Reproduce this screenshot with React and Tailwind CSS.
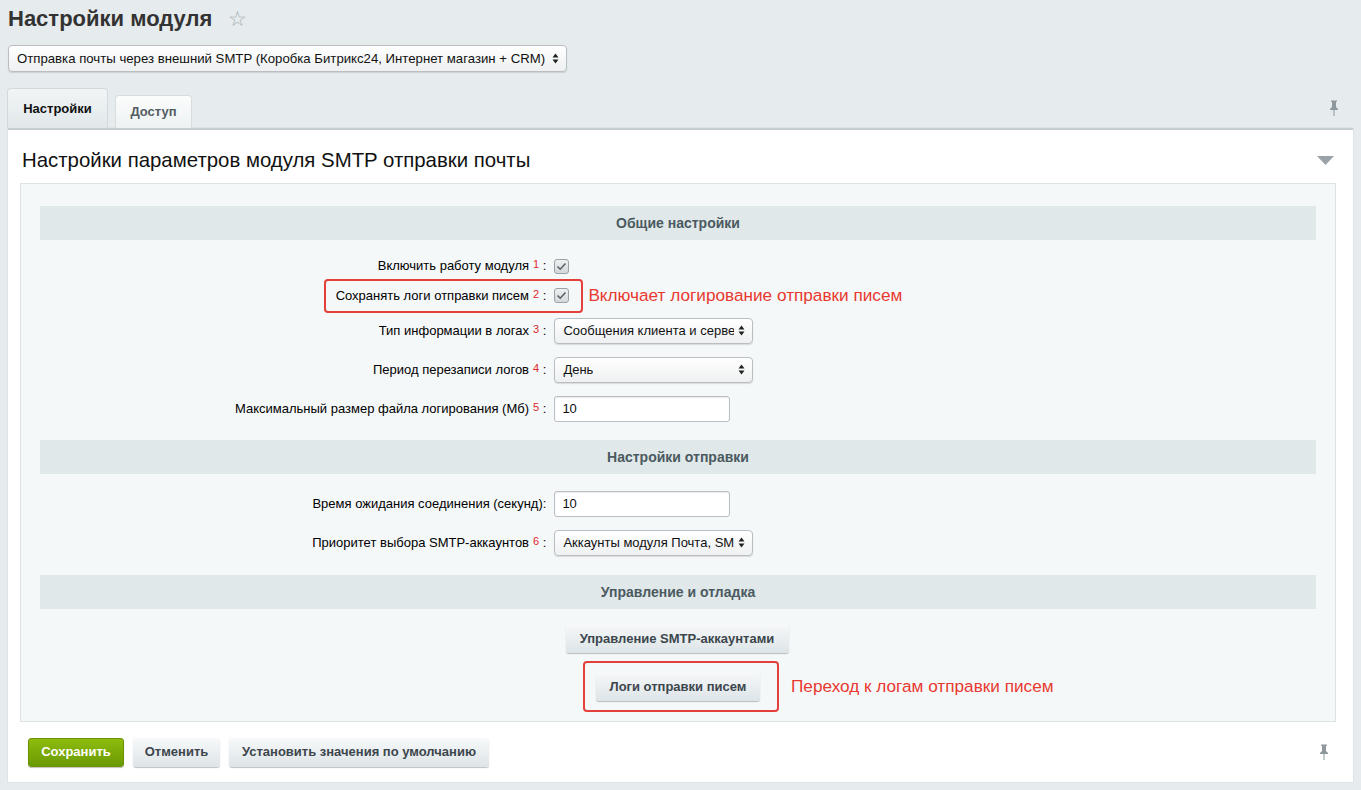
import React from "react";

const font = { fontFamily: '"Liberation Sans", Arial, sans-serif' };

function Arrows() {
  return (
    <svg width="7" height="11" viewBox="0 0 7 11" className="shrink-0 ml-[4px]">
      <path d="M3.5 0.5 L6.5 4.5 H0.5 Z" fill="#222" />
      <path d="M3.5 10.5 L6.5 6.5 H0.5 Z" fill="#222" />
    </svg>
  );
}

function Select({ value, w, h = "h-[26px]", text = "text-[13px]" }) {
  return (
    <div
      className={`${w} ${h} flex items-center justify-between pl-[8px] pr-[7px] rounded-[4px] border border-[#b8bec2] bg-gradient-to-b from-white to-[#eef0f1] shadow-[0_1px_1px_rgba(0,0,0,0.12)] overflow-hidden`}
    >
      <span className={`${text} text-[#111] whitespace-nowrap overflow-hidden`}>{value}</span>
      <Arrows />
    </div>
  );
}

function Input({ value }) {
  return (
    <div className="w-[176px] h-[26px] flex items-center px-[7px] bg-white border border-[#b8bec2] rounded-[3px] shadow-[inset_0_1px_1px_rgba(0,0,0,0.08)] text-[13px] text-[#111]">
      {value}
    </div>
  );
}

function Checkbox() {
  return (
    <div className="w-[15px] h-[15px] rounded-[3px] border border-[#9aa2a6] bg-gradient-to-b from-[#eef0f1] to-[#d3d8db] flex items-center justify-center">
      <svg width="11" height="9" viewBox="0 0 11 9">
        <path d="M1.5 4.5 L4.2 7.2 L9.5 1.5" fill="none" stroke="#5b6266" strokeWidth="1.6" />
      </svg>
    </div>
  );
}

function Sup({ n }) {
  return <sup className="text-[11px] text-[#e0292b] ml-[4px] relative top-[-2px]">{n}</sup>;
}

function Row({ label, n, h, children }) {
  return (
    <div className={`grid grid-cols-[40%_60%] items-center ${h}`}>
      <div className="text-right pr-[4px] text-[13px] text-[#000]">
        {label}
        {n ? <Sup n={n} /> : null}
        {n ? " :" : ""}
      </div>
      <div className="pl-[4px] flex items-center">{children}</div>
    </div>
  );
}

function Header({ title }) {
  return (
    <div className="h-[34px] bg-[#e0e8ea] flex items-center justify-center text-[14px] font-bold text-[#4b5a60]">
      {title}
    </div>
  );
}

function Btn({ children, className = "" }) {
  return (
    <button
      className={`h-[29px] rounded-[3px] bg-gradient-to-b from-[#f7f9fa] to-[#dde4e7] shadow-[0_1px_1px_rgba(0,0,0,0.25)] text-[13px] font-bold text-[#3c464c] ${className}`}
    >
      {children}
    </button>
  );
}

function Pin() {
  return (
    <svg width="10" height="16" viewBox="0 0 10 16">
      <path d="M2 0.5 H8 V1.8 H7 V7 L9 9 V10 H1 V9 L3 7 V1.8 H2 Z" fill="#8e979b" />
      <rect x="4.5" y="10" width="1" height="6" fill="#8e979b" />
    </svg>
  );
}

export default function App() {
  return (
    <div style={font} className="w-[1361px] h-[790px] bg-[#e6ebed] overflow-hidden">
      {/* title */}
      <div className="h-[36px] flex items-center pl-2 pt-[1px]">
        <span className="text-[22px] font-bold text-[#333]">Настройки модуля</span>
        <span className="ml-[16px] text-[#a3abaf] text-[21px] leading-none">☆</span>
      </div>

      <div className="mt-[9px] ml-2">
        <Select
          value="Отправка почты через внешний SMTP (Коробка Битрикс24, Интернет магазин + CRM)"
          w="w-[559px]"
          h="h-[27px]"
          text="text-[13.2px]"
        />
      </div>

      {/* tabs */}
      <div className="mt-[16px] ml-[7px] mr-2 h-[40px] flex items-end relative">
        <div className="h-[40px] w-[101px] rounded-t-[4px] border border-b-0 border-[#d3dadd] bg-gradient-to-b from-[#f2f5f6] to-[#e1e8ea] flex items-center justify-center text-[13px] font-bold text-[#111]">
          Настройки
        </div>
        <div className="ml-[7px] h-[33px] w-[77px] rounded-t-[4px] border border-b-0 border-[#d6dcdf] bg-gradient-to-b from-[#fbfcfc] to-[#eef2f3] flex items-center justify-center text-[13px] font-bold text-[#535c61]">
          Доступ
        </div>
        <div className="absolute right-[14px] top-[12px]">
          <Pin />
        </div>
      </div>

      {/* panel */}
      <div className="ml-2 w-[1345px] h-[654px] bg-white border-t-2 border-[#c6ced1] shadow-[0_0_1px_rgba(0,0,0,0.2)]">
        <div className="h-[53px] flex items-center justify-between pl-[14px] pr-[19px] pt-[8px]">
          <span className="text-[20.4px] text-[#111]">Настройки параметров модуля SMTP отправки почты</span>
          <svg width="17" height="9" viewBox="0 0 17 9">
            <path d="M0 0 H17 L8.5 9 Z" fill="#9aa3a7" />
          </svg>
        </div>

        <div className="ml-3 w-[1316px] h-[539px] border border-[#dde4e6] bg-[#f5f8f9] px-[19px] pt-[22px]">
          <Header title="Общие настройки" />
          <div className="pt-[11px] pb-[12px]">
            <Row label="Включить работу модуля" n="1" h="h-[30px]">
              <Checkbox />
            </Row>
            <div className="relative">
              <div className="absolute left-[284px] top-[-2px] w-[259px] h-[34px] border-2 border-[#e4403b] rounded-[4px]" />
              <Row label="Сохранять логи отправки писем" n="2" h="h-[30px]">
                <Checkbox />
                <span className="ml-[19px] text-[17.2px] text-[#e8382f]">Включает логирование отправки писем</span>
              </Row>
            </div>
            <Row label="Тип информации в логах" n="3" h="h-[39px]">
              <Select value="Сообщения клиента и сервера" w="w-[199px]" />
            </Row>
            <Row label="Период перезаписи логов" n="4" h="h-[39px]">
              <Select value="День" w="w-[199px]" />
            </Row>
            <Row label="Максимальный размер файла логирования (Мб)" n="5" h="h-[39px]">
              <Input value="10" />
            </Row>
          </div>

          <Header title="Настройки отправки" />
          <div className="pt-[10px] pb-[13px]">
            <div className="grid grid-cols-[40%_60%] items-center h-[39px]">
              <div className="text-right pr-[4px] text-[13px] text-[#000]">Время ожидания соединения (секунд):</div>
              <div className="pl-[4px] flex items-center">
                <Input value="10" />
              </div>
            </div>
            <Row label="Приоритет выбора SMTP-аккаунтов" n="6" h="h-[39px]">
              <Select value="Аккаунты модуля Почта, SMTP" w="w-[199px]" />
            </Row>
          </div>

          <Header title="Управление и отладка" />
          <div className="flex flex-col items-center pt-[15px]">
            <Btn className="w-[223px] ml-[-2px]">Управление SMTP-аккаунтами</Btn>
            <div className="relative mt-[8px] ml-[6px] border-2 border-[#e4403b] rounded-[4px] pl-[11px] pr-[17px] py-[9px]">
              <Btn className="w-[164px]">Логи отправки писем</Btn>
              <span className="absolute left-full top-1/2 -translate-y-1/2 ml-[14px] whitespace-nowrap text-[17.2px] text-[#e8382f]">
                Переход к логам отправки писем
              </span>
            </div>
          </div>
        </div>

        {/* footer */}
        <div className="h-[60px] flex items-center pl-5 pr-[24px]">
          <button className="h-[29px] w-[96px] rounded-[3px] bg-gradient-to-b from-[#8ebc0d] to-[#6a9a03] border border-[#6c9200] shadow-[0_1px_1px_rgba(0,0,0,0.25)] text-[13px] font-bold text-white">
            Сохранить
          </button>
          <Btn className="ml-[9px] w-[87px]">Отменить</Btn>
          <Btn className="ml-[9px] w-[260px]">Установить значения по умолчанию</Btn>
          <div className="ml-auto">
            <Pin />
          </div>
        </div>
      </div>
    </div>
  );
}
